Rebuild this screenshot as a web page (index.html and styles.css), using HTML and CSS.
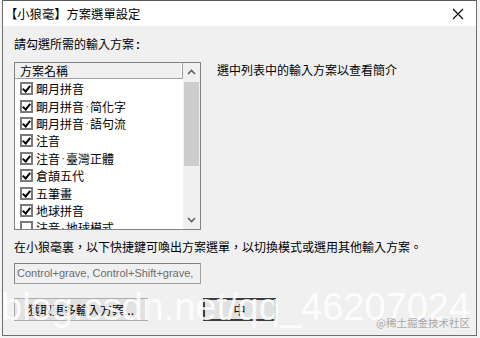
FILE: index.html
```html
<!DOCTYPE html>
<html>
<head>
<meta charset="utf-8">
<link rel="stylesheet" href="styles.css">
</head>
<body>
<div class="window">
  <div class="titlebar">
    <span class="title">【小狼毫】方案選單設定</span>
    <svg class="close" width="12" height="12" viewBox="0 0 12 12"><path d="M1 1L11 11M11 1L1 11" stroke="#000" stroke-width="1.1"/></svg>
  </div>
  <div class="body">
    <div class="label">請勾選所需的輸入方案<span class="colon">:</span></div>
    <div class="row">
      <div class="listbox">
        <div class="listmain">
          <div class="header"><span class="hcell">方案名稱</span></div>
          <div class="items">
            <div class="item"><span class="cb"></span>朙月拼音</div>
            <div class="item"><span class="cb"></span>朙月拼音<span class="dot">·</span>简化字</div>
            <div class="item"><span class="cb"></span>朙月拼音<span class="dot">·</span>語句流</div>
            <div class="item"><span class="cb"></span>注音</div>
            <div class="item"><span class="cb"></span>注音<span class="dot">·</span>臺灣正體</div>
            <div class="item"><span class="cb"></span>倉頡五代</div>
            <div class="item"><span class="cb"></span>五筆畫</div>
            <div class="item"><span class="cb"></span>地球拼音</div>
            <div class="item"><span class="cb off"></span>注音<span class="dot">·</span>地球模式</div>
          </div>
        </div>
        <div class="scrollbar">
          <svg class="arrow" width="9" height="6" viewBox="0 0 9 6"><path d="M1 5L4.5 1.5L8 5" fill="none" stroke="#606060" stroke-width="1.6"/></svg>
          <div class="track"><div class="thumb"></div></div>
          <svg class="arrow" width="9" height="6" viewBox="0 0 9 6"><path d="M1 1L4.5 4.5L8 1" fill="none" stroke="#606060" stroke-width="1.6"/></svg>
        </div>
      </div>
      <div class="desc">選中列表中的輸入方案以查看簡介</div>
    </div>
    <div class="label hint">在小狼毫裏，以下快捷鍵可喚出方案選單，以切換模式或選用其他輸入方案。</div>
    <div class="hotkeys">Control+grave, Control+Shift+grave,</div>
    <div class="buttons">
      <button class="btn more">獲取更多輸入方案...</button>
      <button class="btn ok">中</button>
    </div>
  </div>
  <div class="watermark">blog.csdn.net/qq_46207024</div>
  <div class="brand">@稀土掘金技术社区</div>
</div>
</body>
</html>
```
FILE: styles.css
```css
html, body {
  margin: 0;
  padding: 0;
  background: #f4f4f4;
  width: 480px;
  height: 338px;
  overflow: hidden;
}
body {
  font-family: "Noto Sans CJK TC", "Noto Sans", sans-serif;
  font-size: 12px;
  color: #000;
}
.window {
  position: relative;
  margin-left: 2px;
  width: 473px;
  height: 334px;
  border: 1px solid #6e6e6e;
  border-top-color: #5a5a5a;
  background: #f0f0f0;
  display: flex;
  flex-direction: column;
  overflow: hidden;
}
.titlebar {
  height: 25px;
  background: #fff;
  display: flex;
  align-items: center;
  justify-content: space-between;
  padding: 0 12px 0 2px;
  flex-shrink: 0;
}
.title {
  font-size: 12.3px;
}
.close {
  display: block;
}
.body {
  padding: 10px 0 0 11px;
  display: flex;
  flex-direction: column;
}
.label {
  line-height: 16px;
  height: 16px;
}
.colon {
  font-family: "Liberation Sans", sans-serif;
  font-weight: bold;
  margin-left: 2px;
}
.row {
  display: flex;
  margin-top: 10px;
}
.listbox {
  width: 185px;
  height: 166px;
  border: 1px solid #828282;
  background: #fff;
  display: flex;
}
.listmain {
  flex: 1;
  display: flex;
  flex-direction: column;
  overflow: hidden;
}
.header {
  height: 15px;
  border-bottom: 1px solid #a0a0a0;
  display: flex;
}
.hcell {
  width: 164px;
  border-right: 1px solid #a0a0a0;
  background: #f0f0f0;
  padding-left: 5px;
  line-height: 15px;
  box-shadow: inset -1px 0 #fff;
}
.items {
  padding-top: 1px;
}
.item {
  height: 17.4px;
  display: flex;
  align-items: center;
  padding-left: 5px;
  white-space: nowrap;
}
.dot {
  font-family: "Liberation Sans", sans-serif;
  color: #3a6a5a;
  margin: 0 1px;
}
.cb {
  width: 9px;
  height: 9px;
  border: 2px solid #7a7a7a;
  background: #fff;
  margin-right: 3px;
  position: relative;
  flex-shrink: 0;
}
.cb::after {
  content: "";
  position: absolute;
  left: 2px;
  top: 0px;
  width: 3px;
  height: 6px;
  border: solid #000;
  border-width: 0 2px 2px 0;
  transform: rotate(40deg);
}
.cb.off::after {
  display: none;
}
.scrollbar {
  width: 17px;
  background: #f0f0f0;
  display: flex;
  flex-direction: column;
  align-items: center;
}
.arrow {
  margin: 6px 0;
  flex-shrink: 0;
}
.track {
  flex: 1;
  width: 100%;
  padding-top: 1px;
}
.thumb {
  width: 15px;
  margin: 0 auto;
  height: 84px;
  background: #cdcdcd;
}
.desc {
  margin-left: 16px;
  line-height: 16px;
}
.hint {
  margin-top: 9px;
}
.hotkeys {
  margin-top: 8px;
  width: 183px;
  height: 19px;
  border: 1px solid #a0a0a0;
  border-top-color: #828282;
  border-left-color: #828282;
  font-family: "Liberation Sans", "Noto Sans", sans-serif;
  font-size: 11px;
  color: #6d6d6d;
  line-height: 19px;
  padding-left: 2px;
  white-space: nowrap;
  overflow: hidden;
}
.buttons {
  display: flex;
  margin-top: 14px;
}
.btn {
  font-family: "Noto Sans CJK TC", sans-serif;
  font-size: 12px;
  height: 23px;
  background: #e1e1e1;
  border: 1px solid #adadad;
  padding: 0;
  color: #000;
}
.more {
  width: 134px;
}
.ok {
  width: 73px;
  margin-left: 55px;
  border: 2px solid #3c3c3c;
}
.watermark {
  position: absolute;
  left: -2px;
  top: 287px;
  font-family: "Liberation Sans", "Noto Sans", sans-serif;
  font-size: 38px;
  line-height: 38px;
  color: rgba(255, 255, 255, 0.85);
  white-space: nowrap;
}
.brand {
  position: absolute;
  right: 6px;
  bottom: 5px;
  font-size: 10.5px;
  color: #a8a8a8;
}
```
